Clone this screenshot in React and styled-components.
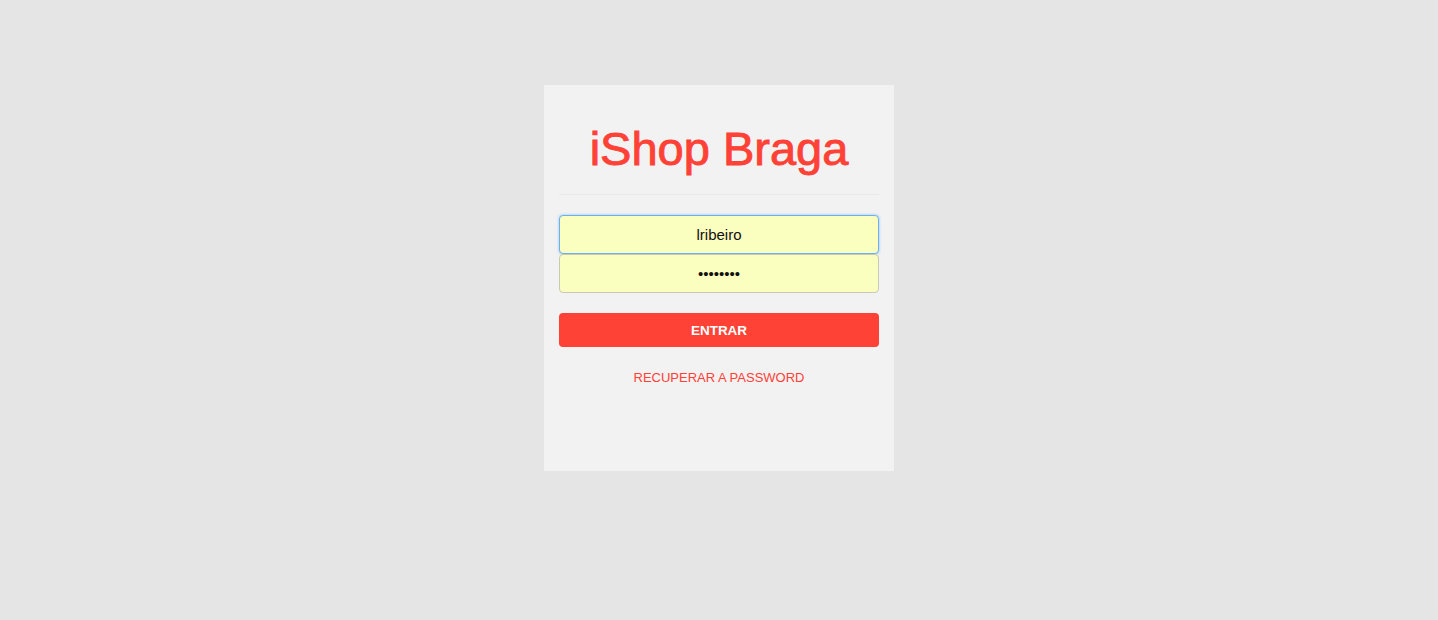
import React, { useState } from 'react';
import styled, { createGlobalStyle } from 'styled-components';

const GlobalStyle = createGlobalStyle`
  html, body {
    margin: 0;
    padding: 0;
    background: #e5e5e5;
    font-family: "Liberation Sans", Arial, Helvetica, sans-serif;
  }
`;

const Page = styled.div`
  min-height: 620px;
  display: flex;
  justify-content: center;
  align-items: flex-start;
  padding-top: 85px;
  box-sizing: border-box;
`;

const Card = styled.div`
  width: 350px;
  height: 386px;
  background: #f2f2f2;
  padding: 0 15px;
  box-sizing: border-box;
  display: flex;
  flex-direction: column;
`;

const Title = styled.h1`
  margin: 0;
  padding: 37px 0 18px;
  font-size: 47px;
  font-weight: normal;
  line-height: 54px;
  color: #ff4136;
  -webkit-text-stroke: 0.9px #ff4136;
  text-align: center;
  border-bottom: 1px solid #e9e9e9;
`;

const Form = styled.form`
  display: flex;
  flex-direction: column;
  margin-top: 20px;
`;

const Input = styled.input`
  height: 39px;
  box-sizing: border-box;
  border: 1px solid ${({ $focused }) => ($focused ? '#6ab0f2' : '#c9c9b8')};
  border-radius: 4px;
  background: #fafebf;
  text-align: center;
  font-family: "Liberation Sans", Arial, sans-serif;
  font-size: 15px;
  color: #111;
  outline: none;
  position: relative;
  box-shadow: ${({ $focused }) => ($focused ? '0 0 3px rgba(80,160,240,0.6)' : 'none')};
`;

const Button = styled.button`
  margin-top: 20px;
  height: 34px;
  border: none;
  border-radius: 4px;
  background: #ff4136;
  color: #fff;
  font-family: "Liberation Sans", Arial, sans-serif;
  font-weight: bold;
  font-size: 13.5px;
  cursor: pointer;
`;

const Link = styled.a`
  display: block;
  margin-top: 23px;
  text-align: center;
  color: #ff4136;
  font-size: 13px;
  text-decoration: none;
`;

export default function App() {
  const [user, setUser] = useState('lribeiro');
  const [pass, setPass] = useState('12345678');

  return (
    <>
      <GlobalStyle />
      <Page>
        <Card>
          <Title>iShop Braga</Title>
          <Form onSubmit={e => e.preventDefault()}>
            <Input $focused type="text" value={user} onChange={e => setUser(e.target.value)} />
            <Input type="password" value={pass} onChange={e => setPass(e.target.value)} />
            <Button type="submit">ENTRAR</Button>
          </Form>
          <Link href="#">RECUPERAR A PASSWORD</Link>
        </Card>
      </Page>
    </>
  );
}
